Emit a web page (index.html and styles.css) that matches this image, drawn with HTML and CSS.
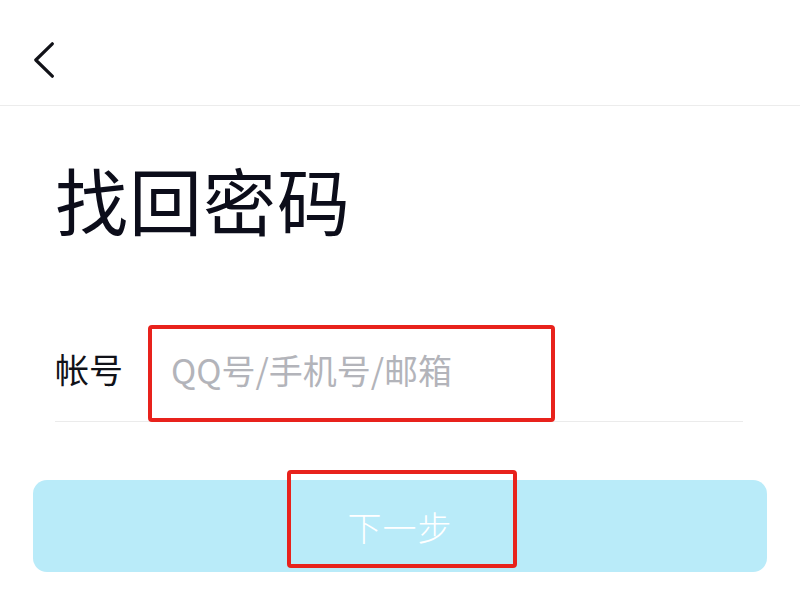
FILE: index.html
```html
<!DOCTYPE html>
<html lang="zh-CN">
<head>
<meta charset="utf-8">
<title>找回密码</title>
<link rel="stylesheet" href="styles.css">
</head>
<body>
<div class="page">
  <header class="nav">
    <svg class="back" width="20" height="36" viewBox="0 0 20 36" aria-label="返回">
      <path d="M18.3 1.8 L1.8 18 L18.3 34.2" fill="none" stroke="#111218" stroke-width="3.2" stroke-linecap="round" stroke-linejoin="round"/>
    </svg>
  </header>
  <main class="content">
    <h1 class="title">找回密码</h1>
    <div class="field">
      <label class="field-label" for="account">帐号</label>
      <input class="field-input" id="account" type="text" placeholder="QQ号/手机号/邮箱">
    </div>
    <button class="next-btn" type="button">下一步</button>
  </main>
  <div class="mark mark-input"></div>
  <div class="mark mark-btn"></div>
</div>
</body>
</html>
```

FILE: styles.css
```css
* {
  box-sizing: border-box;
}

html, body {
  margin: 0;
  padding: 0;
  background: #ffffff;
}

body {
  font-family: "Noto Sans CJK SC", "Noto Sans", sans-serif;
  color: #0d0e1a;
}

.page {
  position: relative;
  width: 800px;
  height: 600px;
  overflow: hidden;
}

.nav {
  height: 106px;
  border-bottom: 1px solid #ececec;
  padding: 42px 0 0 34px;
}

.back {
  display: block;
}

.content {
  display: flex;
  flex-direction: column;
}

.title {
  margin: 56px 0 0 55px;
  font-size: 73px;
  line-height: 73px;
  font-weight: 400;
  color: #0c0d1a;
  letter-spacing: 1px;
}

.field {
  display: flex;
  align-items: flex-start;
  margin: 91px 57px 0 55px;
  height: 96px;
  border-bottom: 1px solid #ebebeb;
}

.field-label {
  flex: none;
  width: 95px;
  height: 86px;
  line-height: 86px;
  font-size: 34px;
  color: #111218;
}

.field-input {
  flex: 1;
  min-width: 0;
  height: 86px;
  border: none;
  outline: none;
  background: transparent;
  padding: 0 0 0 21px;
  font-family: "Noto Sans CJK SC", "Noto Sans", sans-serif;
  font-size: 34px;
  color: #111218;
}

.field-input::placeholder {
  color: #b3b4ba;
}

.next-btn {
  margin: 58px 33px 0 33px;
  height: 92px;
  border: none;
  border-radius: 14px;
  background: #b9ebf9;
  color: #ffffff;
  font-family: "Noto Sans CJK SC", "Noto Sans", sans-serif;
  font-size: 34px;
  font-weight: 300;
  letter-spacing: 1px;
  padding: 0;
}

.mark {
  position: absolute;
  border: 4px solid #e8221c;
  border-radius: 4px;
  pointer-events: none;
}

.mark-input {
  left: 148px;
  top: 325px;
  width: 407px;
  height: 97px;
}

.mark-btn {
  left: 287px;
  top: 470px;
  width: 230px;
  height: 98px;
}
```
